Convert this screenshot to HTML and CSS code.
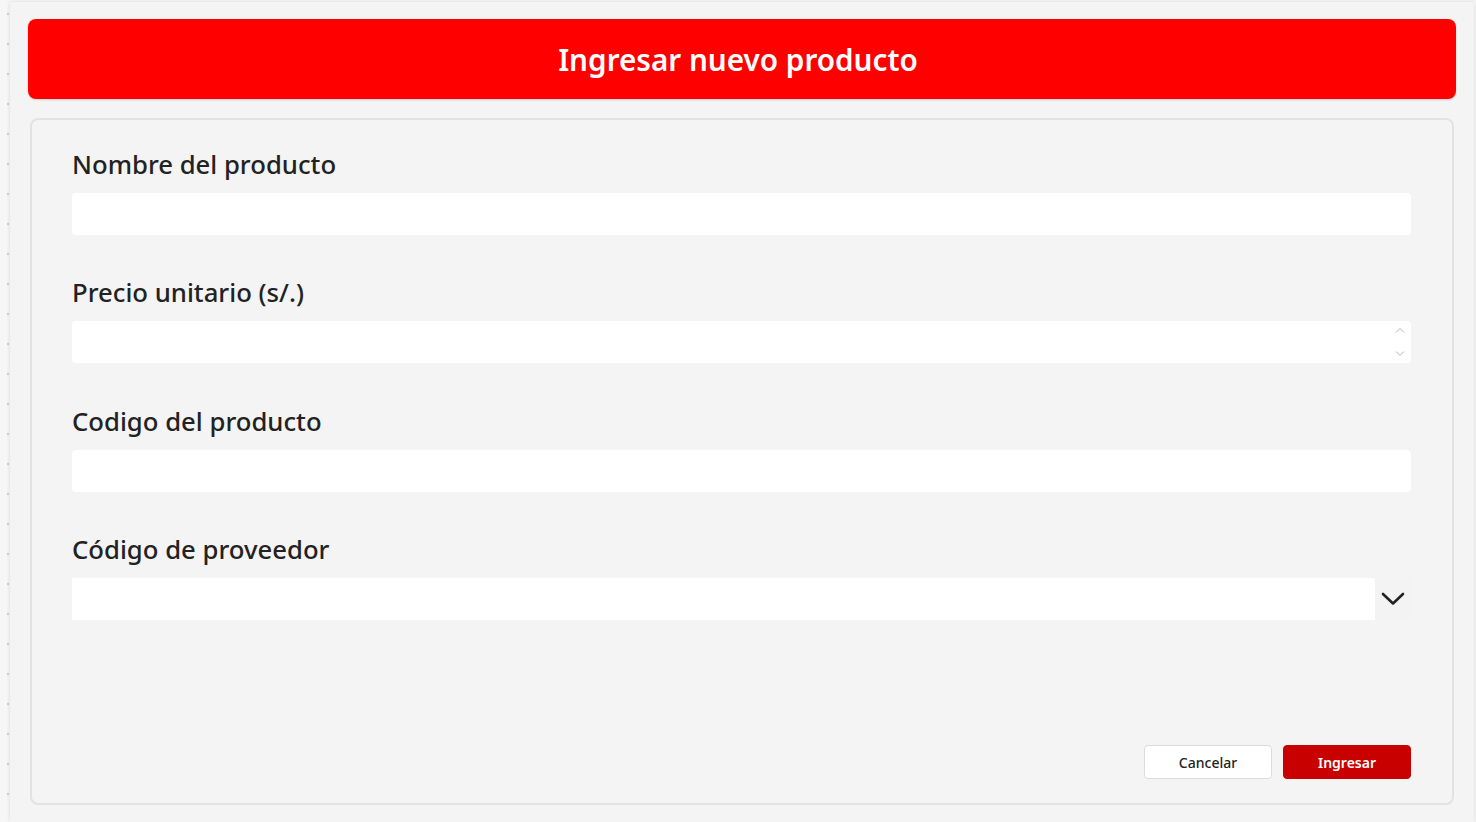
FILE: index.html
```html
<!DOCTYPE html>
<html lang="es">
<head>
<meta charset="utf-8">
<title>Ingresar nuevo producto</title>
<link rel="stylesheet" href="styles.css">
</head>
<body>
<div class="app">
  <header class="header">
    <h1 class="title">Ingresar nuevo producto</h1>
  </header>
  <section class="card">
    <div class="field">
      <label class="label">Nombre del producto</label>
      <div class="input"></div>
    </div>
    <div class="field">
      <label class="label">Precio unitario (s/.)</label>
      <div class="input input-number">
        <span class="spin">
          <svg width="10" height="6" viewBox="0 0 10 6"><path d="M1 5.5 L5 1.5 L9 5.5" fill="none" stroke="#b5b5b5" stroke-width="1"/></svg>
          <svg width="10" height="6" viewBox="0 0 10 6"><path d="M1 0.5 L5 4.5 L9 0.5" fill="none" stroke="#b5b5b5" stroke-width="1"/></svg>
        </span>
      </div>
    </div>
    <div class="field">
      <label class="label">Codigo del producto</label>
      <div class="input"></div>
    </div>
    <div class="field">
      <label class="label">Código de proveedor</label>
      <div class="select">
        <div class="select-box"></div>
        <div class="select-btn">
          <svg width="24" height="14" viewBox="0 0 24 14"><path d="M2 2 L12 11.5 L22 2" fill="none" stroke="#222" stroke-width="2.6" stroke-linecap="round" stroke-linejoin="round"/></svg>
        </div>
      </div>
    </div>
    <div class="actions">
      <button class="btn btn-secondary">Cancelar</button>
      <button class="btn btn-primary">Ingresar</button>
    </div>
  </section>
</div>
</body>
</html>
```

FILE: styles.css
```css
html, body {
  margin: 0;
  padding: 0;
  height: 100%;
}
body {
  background-color: #f6f6f6;
  background-image: radial-gradient(circle, #cfcfcf 1.2px, transparent 1.6px);
  background-size: 30px 30px;
  background-position: -7px -1px;
  font-family: "Noto Sans", "Open Sans", sans-serif;
  overflow: hidden;
}
.app {
  margin: 2px 2px 0 10px;
  height: 820px;
  background: #f4f4f4;
  box-shadow: 0 0 4px rgba(0,0,0,0.12);
  padding: 17px 18px 0 18px;
  box-sizing: border-box;
}
.header {
  height: 80px;
  background: #ff0000;
  border-radius: 8px;
  display: flex;
  align-items: center;
  justify-content: center;
  padding-right: 8px;
  box-shadow: 0 1px 2px rgba(0,0,0,0.15);
}
.title {
  margin: 0;
  color: #ffffff;
  font-size: 29.7px;
  font-weight: 600;
  letter-spacing: 0;
}
.card {
  margin: 19px 2px 0 2px;
  height: 687px;
  box-sizing: border-box;
  border: 2px solid #e2e2e2;
  border-radius: 8px;
  background: #f4f4f4;
  padding: 27px 41px 24px 40px;
  display: flex;
  flex-direction: column;
}
.field {
  display: flex;
  flex-direction: column;
  margin-bottom: 40.4px;
}
.label {
  font-size: 25.7px;
  line-height: 36px;
  color: #222222;
  font-weight: 500;
  margin-bottom: 10px;
}
.input {
  height: 42px;
  background: #ffffff;
  border-radius: 4px;
  position: relative;
}
.spin {
  position: absolute;
  right: 6px;
  top: 6px;
  bottom: 6px;
  display: flex;
  flex-direction: column;
  justify-content: space-between;
}
.select {
  display: flex;
  height: 42px;
}
.select-box {
  flex: 1;
  background: #ffffff;
}
.select-btn {
  width: 36px;
  display: flex;
  align-items: center;
  justify-content: center;
  background: #f3f3f3;
}
.actions {
  margin-top: auto;
  display: flex;
  justify-content: flex-end;
  gap: 11px;
}
.btn {
  width: 128px;
  height: 34px;
  border-radius: 4px;
  font-family: "Noto Sans", "Open Sans", sans-serif;
  font-size: 14px;
  cursor: pointer;
}
.btn-secondary {
  background: #ffffff;
  border: 1px solid #dcdcdc;
  color: #222;
  font-weight: 500;
}
.btn-primary {
  background: #c80000;
  border: 1px solid #c80000;
  color: #ffffff;
  font-weight: 600;
}
```
